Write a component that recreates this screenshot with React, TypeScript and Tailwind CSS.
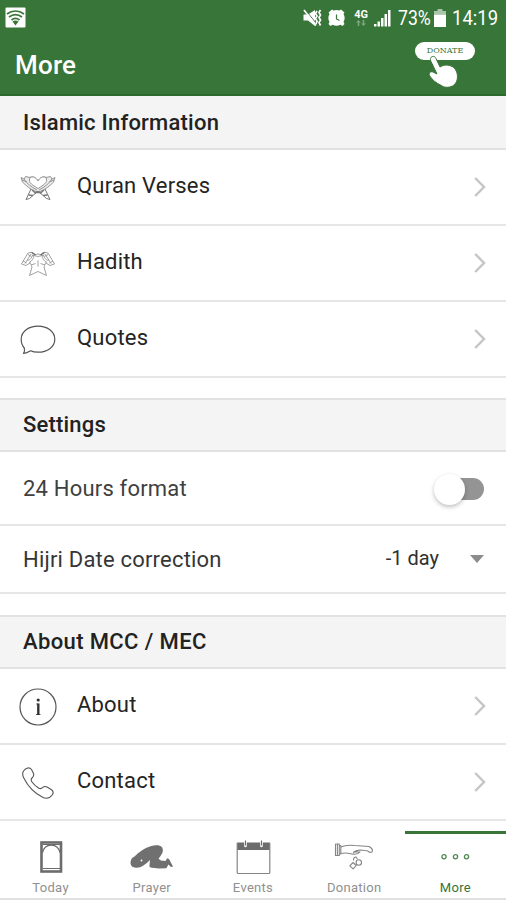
import type { ReactNode } from "react";

const QuranIcon = () => (
    <svg width="36" height="26" viewBox="0 0 36 26" fill="none" stroke="#959595" strokeWidth="1" strokeLinejoin="round">
        <path d="M1 2.500 4 4l1.500-2.500 4.500 1C13 1 16 2.500 18 6c2-3.500 5-5 8-3.500l4.500-1L32 4l3-1.500-1.500 4.500C30 11 25 14.500 20 16.500h-4C11 14.500 6 11 2.500 7Z" fill="#ececec" />
        <path d="M10 2.500c-1.500 4-.5 6 8 11 8.500-5 9.500-7 8-11C23 1 20 2.500 18 6c-2-3.500-5-5-8-3.500Z" fill="#fff" />
        <path d="M4 4c2.500 4 7 8 13 11M32 4c-2.500 4-7 8-13 11M2 5l5 2M34 5l-5 2" />
        <path d="m11 14-5 10.500 3.500-1L18 16l8.500 7.500 3.500 1L25 14" stroke="#777" />
        <path d="m8.500 20 4.500.5M27.500 20l-4.500.5M12 15l4 3.500M24 15l-4 3.500M14 17.500h8" stroke="#777" strokeWidth="1.300" />
    </svg>
);

const HadithIcon = () => (
    <svg width="36" height="26" viewBox="0 0 36 26" fill="none" stroke="#959595" strokeWidth=".9" strokeLinejoin="round">
        <path d="M1.500 13 8 2l4-.8 3.500 2.300L18 3l2.500.5L24 1.200l4 .8 6.500 11-4.500 1.500-4-2.500M1.500 13 6 14.500l4-2.500" />
        <path d="M5 12.500 11 3M31 12.500 25 3M9 11.500c2.500-1 5-4 5-7.500M27 11.500c-2.500-1-5-4-5-7.500M3 10l3.500 2M33 10l-3.500 2" />
        <path d="M7 9c2 1.200 5-2 5.500-5M29 9c-2 1.200-5-2-5.500-5M8 3.500l3.500 2M28 3.500l-3.500 2" />
        <path d="M10.500 11.500c-.3 1.500 1 2.500 1.500 4.500l-2.500 8.500L18 20.500l8.500 4L24 16c.5-2 1.800-3 1.500-4.500" />
        <path d="M18 9.500v6M12 4l6 1.500L24 4M11 14l4.500-1.500M25 14l-4.500-1.500" />
        <path d="M11.500 1.500 15.500 4M24.500 1.500 20.500 4" stroke="#666" strokeWidth="1.100" />
    </svg>
);

const QuoteIcon = () => (
    <svg width="36" height="30" viewBox="0 0 36 30" fill="none" stroke="#555" strokeWidth="1.200" strokeLinejoin="round">
        <path d="M3.500 28.300c1.200-1.500 1.300-3.300.8-5.300C2.200 20.800 1.200 17.500 1.200 14.300 1.200 6.500 8.700 1.200 18 1.200s16.800 5.300 16.800 13.100S27.300 27.200 18 27.200c-2.800 0-5-.2-7.300-1.500-2 1-4.600 2.600-7.200 2.600Z" />
    </svg>
);

const InfoIcon = () => (
    <svg width="38" height="38" viewBox="0 0 38 38" fill="none">
        <circle cx="19" cy="19" r="18" stroke="#555" strokeWidth="1.200" />
        <circle cx="19.200" cy="12" r="1.600" fill="#333" />
        <path d="M17.300 16h2M17 26.500h4.500" stroke="#555" strokeWidth="1" />
        <path d="M19.300 15.500V27" stroke="#333" strokeWidth="2.400" />
    </svg>
);

const PhoneIcon = () => (
    <svg width="34" height="34" viewBox="0 0 34 34" fill="none" stroke="#555" strokeWidth="1.100" strokeLinejoin="round">
        <path d="M2.500 5C5 1.500 8.500.8 10.500 3.500l2 4c.7 2-.2 3.300-1.500 4.500-1.500 1.500-.8 2.800 0 4 1.800 2.600 4.200 4.500 6.500 6 1.600 1 2.800 1 4-.3 1.300-1.400 3-1.500 4.500-.7l4.500 2.700c2 1.500 2 3.500.7 5.300-2.500 3.200-6.500 4-10 2C12.500 26.500 6.500 19.500 2.800 12 1.500 9.500 1.200 7.200 2.500 5Z" />
    </svg>
);

const TodayIcon = () => (
    <svg width="24" height="34" viewBox="0 0 24 34" fill="none" stroke="#6c6c6c">
        <rect x="2.500" y="2.500" width="19.500" height="29" strokeWidth="2.600" />
        <path d="M3.500 12.500C4.500 8 8 5 12.200 5s7.800 3 8.800 7.500" strokeWidth="1.400" />
        <path d="M3.500 4.500h17.500M4 28.500h17" strokeWidth="1" />
    </svg>
);

const PrayerIcon = () => (
    <svg width="44" height="26" viewBox="0 0 44 26" fill="#707070">
        <path d="M4.500 12.500C9 8 14 4 20.500 2.200 25 1 30 .8 32 3.200c1.800 2.500.8 5.500-1 8l-2.500 3.500 2.500 1.800 4.500.5 1.700-2.700 1.800.8 4 7.400-2 .5-2.600-2.500-2 3.800-7.400.2-7-.7c-2 0-2.800-1-2.500-2.800l.5-5-3.500 3.300-3.500 2.500c-2 1.300-4 2-7 1.900-3.500 0-5.500-1.900-5.500-4.900 0-3 1.500-5.500 4-6.300Z" />
        <circle cx="11.500" cy="16.500" r=".9" fill="#fff" />
    </svg>
);

const EventsIcon = () => (
    <svg width="35" height="36" viewBox="0 0 35 36" fill="none">
        <path d="M1 3.500h33V11H1Z" fill="#6c6c6c" />
        <path d="M1.200 4v29.500q0 1 1 1h30.600q1 0 1-1V4" stroke="#858585" strokeWidth="1.200" />
        <path d="M9.500 3v4M25.500 3v4" stroke="#fff" strokeWidth="2.600" strokeLinecap="round" />
        <path d="M9.500 1.500v5M25.500 1.500v5" stroke="#6c6c6c" strokeWidth="1.100" />
    </svg>
);

const DonationIcon = () => (
    <svg width="40" height="30" viewBox="0 0 40 30" fill="none" stroke="#858585" strokeWidth="1.100" strokeLinejoin="round">
        <path d="M1.500 2h3.800v11.500H1.500ZM3.400 2v11.500M5.300 3.500h1.500V12H5.300" />
        <path d="M6.800 5C11 3 17 3 21 3.500l14 1c3 1.500 4 3.500 3 5.500l-2 .5c-1.500-1.500-3-2-5-2l-5-.5c-2 0-4 1.500-6 2h6c-1.500 2-4.500 2.500-8 2-4-1-8-1.500-11.200-.5" />
        <path d="M19 11.500c1-2 3-3 6-3" />
        <path d="M19.500 18.500c0-2.200 1-3.500 2.500-3.500l1.500 2" />
        <circle cx="24.800" cy="20.500" r="2.700" />
        <path d="m19 20.500 3.200 3-3 3.300-3.400-3Z" />
    </svg>
);

const MoreIcon = () => (
    <svg width="30" height="8" viewBox="0 0 30 8" fill="none" stroke="#4f8750" strokeWidth="1.300">
        <circle cx="4" cy="3.800" r="2.100" />
        <circle cx="15.500" cy="3.800" r="2.100" />
        <circle cx="26.500" cy="3.800" r="2.100" />
    </svg>
);

const Chevron = () => (
    <svg width="12" height="20" viewBox="0 0 12 20" fill="none" stroke="#c6c6c6" strokeWidth="2.500">
        <path d="m1.200 1 8.800 9-8.800 9" />
    </svg>
);

const StatusBar = () => (
    <div className="flex h-9 items-center text-white">
        <svg className="ml-[5px] -mt-0.5" width="21" height="21" viewBox="0 0 21 21" fill="none">
            <rect x=".5" y=".5" width="20" height="20" rx="1" fill="#fff" />
            <path d="M2 7c5-4 12-4 17 0M4 10c4-3 9-3 13 0M6.500 13c2.500-2 5.500-2 8 0" stroke="#377538" strokeWidth="1.700" />
            <path d="M7.500 14.500c2-1.200 4-1.200 6 0l-3 4Z" fill="#377538" />
        </svg>
        <div className="ml-auto flex items-center pr-2">
            <svg width="19" height="18" viewBox="0 0 19 18" fill="none" stroke="#fff">
                <path d="M.5 5.500H5l7-4.500v16l-7-5.500H.5Z" fill="#fff" stroke="none" />
                <path d="m2.500 1 12 15" stroke="#377538" strokeWidth="1" />
                <path d="m1 1 12 15.500" strokeWidth="1.700" />
                <path d="m14 2-1.500 2.500L14 7l-1.500 2.500L14 12l-1 3M17.500 1 16 3.500 17.500 6 16 8.500l1.500 2.500-1.500 2.500 1.500 3" strokeWidth="1.700" />
            </svg>
            <svg className="ml-1.5" width="17" height="18" viewBox="0 0 17 18" fill="none">
                <path d="M.5 3.500 4 .5l1.500 1a8 8 0 0 1 6 0L13 .5l3.500 3-1 1.500a8 8 0 0 1 0 8l1 2-2 2-2-1.300a8 8 0 0 1-8 0L2.500 17l-2-2 1-2a8 8 0 0 1 0-8Z" fill="#fff" />
                <path d="M8.500 5.500V10l3 1.500" stroke="#377538" strokeWidth="1.200" />
            </svg>
            <div className="ml-[9px] flex w-[15px] flex-col items-center">
                <span className="text-[11px] leading-[10px] font-bold">4G</span>
                <svg width="10" height="6" viewBox="0 0 10 6" fill="#7ea57f">
                    <path d="M2.500 0 5 2.500H3.300V6H1.700V2.500H0ZM7.500 6 5 3.500h1.700V0h1.600v3.500H10Z" />
                </svg>
            </div>
            <svg className="mr-px ml-[5px]" width="17" height="18" viewBox="0 0 17 18" fill="#fff">
                <path d="M0 15h2.500v2.500H0ZM3.500 12.500H6v5H3.500ZM7 9h2.500v8.500H7ZM10.500 5H13v12.500h-2.500ZM14 1h2.500v16.500H14Z" />
            </svg>
            <span className="-mr-[7px] ml-[6px] inline-block origin-left scale-x-[.84] text-[21px] leading-5">73%</span>
            <svg className="ml-1" width="12" height="18" viewBox="0 0 12 18">
                <path d="M3.500 0h5v2H12v3.500H0V2h3.500Z" fill="#a9c4a9" />
                <path d="M0 5.500h12V18H0Z" fill="#fff" />
            </svg>
            <span className="-mr-[6px] ml-[6px] inline-block origin-left scale-x-[.88] text-[21px] leading-5">14:19</span>
        </div>
    </div>
);

const DonateButton = () => (
    <button className="relative mr-[31px] h-[50px] w-[60px]">
        <span className="absolute top-[6px] left-0 flex h-[18px] w-[60px] items-center justify-center rounded-full bg-white font-['DejaVu_Serif',serif] text-[8px] text-[#377538]">
            DONATE
        </span>
        <svg className="absolute top-[19px] left-[13px]" width="31" height="35" viewBox="0 0 31 35">
            <path d="M3 2.500C4.500.8 7 1 8 3.500l4 8.500c3-2 6.500-2.300 9.500-1.500 4.200 1 7 4.300 7.800 9 .8 5.500-1.300 9.500-4.800 11.500-4 2-8.500 1.700-11.500-.7C9 28.500 4 25 1.500 20.500c-1-2.500 1-4.500 3.500-3.500l4 2L3 6.500c-.7-1.500-.7-3 0-4Z" fill="#fff" stroke="#377538" strokeWidth="1" />
        </svg>
    </button>
);

const SectionHeader = ({ title, className }: { title: string; className: string }) => (
    <h2 className={`flex items-center border-[#e2e2e2] bg-[#f4f4f4] pl-[23px] text-[#222] ${className}`}>
        {title}
    </h2>
);

const LinkRow = ({ icon, label }: { icon: ReactNode; label: string }) => (
    <div className="flex h-[76px] items-center border-b-2 border-[#e6e6e6] pr-5">
        <div className="flex w-[76px] justify-center pt-0.5">{icon}</div>
        <span className="-mt-1 flex-1 pl-px text-[22px] tracking-[0.2px] text-[#242424]">{label}</span>
        <Chevron />
    </div>
);

const tabs = [
    { label: "Today", icon: <TodayIcon /> },
    { label: "Prayer", icon: <PrayerIcon /> },
    { label: "Events", icon: <EventsIcon /> },
    { label: "Donation", icon: <DonationIcon /> },
    { label: "More", icon: <MoreIcon />, active: true },
];

const App = () => {
    return (
        <div className="flex h-[900px] w-[506px] flex-col overflow-hidden bg-white font-[Roboto,sans-serif]">
            <header className="h-24 shrink-0 border-b-2 border-[#2a6b2b] bg-[#377538]">
                <StatusBar />
                <div className="flex items-center justify-between">
                    <h1 className="pt-[8px] pl-[15px] text-[26px] font-medium tracking-[0.2px] text-white">More</h1>
                    <DonateButton />
                </div>
            </header>

            <main className="flex-1">
                <SectionHeader title="Islamic Information" className="h-[54px] border-b-2 text-[22px] font-medium tracking-[0.22px]" />
                <LinkRow icon={<QuranIcon />} label="Quran Verses" />
                <LinkRow icon={<HadithIcon />} label="Hadith" />
                <LinkRow icon={<QuoteIcon />} label="Quotes" />

                <SectionHeader title="Settings" className="mt-5 h-[54px] border-y-2 pb-0.5 text-[22px] font-medium tracking-[0.2px]" />
                <div className="flex h-[74px] items-center justify-between border-b-2 border-[#e6e6e6] pr-[22px] pl-[23px]">
                    <span className="text-[22px] tracking-[0.2px] text-[#404040]">24 Hours format</span>
                    <div className="mt-0.5 flex h-[22px] w-[50px] items-center rounded-full bg-gradient-to-r from-transparent from-40% to-[#949494] to-40%">
                        <div className="size-[31px] shrink-0 rounded-full bg-white shadow-[0_2px_4px_rgba(0,0,0,0.25)]" />
                    </div>
                </div>
                <div className="flex h-[68px] items-center border-b-2 border-[#e6e6e6] pr-[22px] pl-[23px]">
                    <span className="flex-1 text-[22px] tracking-[0.2px] text-[#363636]">Hijri Date correction</span>
                    <span className="-mt-0.5 text-[20px] text-[#303030]">-1 day</span>
                    <svg className="ml-[31px]" width="14" height="8" viewBox="0 0 14 8" fill="#8c8c8c">
                        <path d="M0 0h14L7 8Z" />
                    </svg>
                </div>

                <SectionHeader title="About MCC / MEC" className="mt-[21px] h-[54px] border-y-2 pb-0.5 text-[22px] font-medium tracking-[0.38px]" />
                <LinkRow icon={<InfoIcon />} label="About" />
                <LinkRow icon={<PhoneIcon />} label="Contact" />
            </main>

            <nav className="flex h-[69px] shrink-0 border-b-2 border-[#e0e0e0]">
                {tabs.map(({ label, icon, active }) => (
                    <div
                        key={label}
                        className={`flex flex-1 flex-col items-center border-t-3 ${active ? "border-[#377538] text-[#377538]" : "border-transparent text-[#909090]"}`}
                    >
                        <div className="flex h-[46px] items-center">{icon}</div>
                        <span className="text-[13px] leading-4 tracking-[0.3px]">{label}</span>
                    </div>
                ))}
            </nav>
        </div>
    );
};

export default App;
